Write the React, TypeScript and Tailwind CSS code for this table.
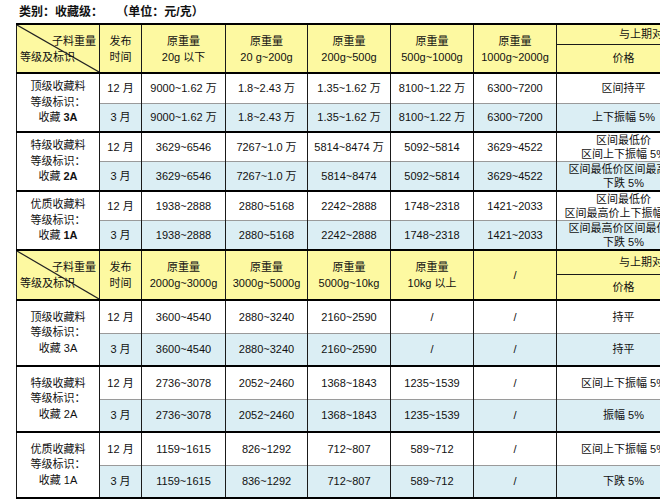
import React from "react";

type Row = { month: string; vals: string[]; change: string[] };
type Group = { name: string; mark: string; rows: Row[] };

const top: Group[] = [
  {
    name: "顶级收藏料",
    mark: "3A",
    rows: [
      { month: "12 月", vals: ["9000~1.62 万", "1.8~2.43 万", "1.35~1.62 万", "8100~1.22 万", "6300~7200"], change: ["区间持平"] },
      { month: "3 月", vals: ["9000~1.62 万", "1.8~2.43 万", "1.35~1.62 万", "8100~1.22 万", "6300~7200"], change: ["上下振幅 5%"] },
    ],
  },
  {
    name: "特级收藏料",
    mark: "2A",
    rows: [
      { month: "12 月", vals: ["3629~6546", "7267~1.0 万", "5814~8474 万", "5092~5814", "3629~4522"], change: ["区间最低价", "区间上下振幅 5%"] },
      { month: "3 月", vals: ["3629~6546", "7267~1.0 万", "5814~8474", "5092~5814", "3629~4522"], change: ["区间最低价区间最高价", "下跌 5%"] },
    ],
  },
  {
    name: "优质收藏料",
    mark: "1A",
    rows: [
      { month: "12 月", vals: ["1938~2888", "2880~5168", "2242~2888", "1748~2318", "1421~2033"], change: ["区间最低价", "区间最高价上下振幅 5%"] },
      { month: "3 月", vals: ["1938~2888", "2880~5168", "2242~2888", "1748~2318", "1421~2033"], change: ["区间最高价区间最低价", "下跌 5%"] },
    ],
  },
];

const bottom: Group[] = [
  {
    name: "顶级收藏料",
    mark: "3A",
    rows: [
      { month: "12 月", vals: ["3600~4540", "2880~3240", "2160~2590", "/", "/"], change: ["持平"] },
      { month: "3 月", vals: ["3600~4540", "2880~3240", "2160~2590", "/", "/"], change: ["持平"] },
    ],
  },
  {
    name: "特级收藏料",
    mark: "2A",
    rows: [
      { month: "12 月", vals: ["2736~3078", "2052~2460", "1368~1843", "1235~1539", "/"], change: ["区间上下振幅 5%"] },
      { month: "3 月", vals: ["2736~3078", "2052~2460", "1368~1843", "1235~1539", "/"], change: ["振幅 5%"] },
    ],
  },
  {
    name: "优质收藏料",
    mark: "1A",
    rows: [
      { month: "12 月", vals: ["1159~1615", "826~1292", "712~807", "589~712", "/"], change: ["区间上下振幅 5%"] },
      { month: "3 月", vals: ["1159~1615", "836~1292", "712~807", "589~712", "/"], change: ["下跌 5%"] },
    ],
  },
];

const bx = "border-x border-x-[#1a1a1a]";

function HeaderRows({ cols, h1, h2 }: { cols: (string | null)[]; h1: string; h2: string }) {
  return (
    <>
      <tr className={`${h1} bg-[#fdf9a1]`}>
        <td rowSpan={2} className={`${bx} border-t-2 border-t-black border-b-2 border-b-black relative p-0`}>
          <svg className="absolute inset-0 w-full h-full" preserveAspectRatio="none" viewBox="0 0 100 100">
            <line x1="0" y1="0" x2="100" y2="100" stroke="#222" strokeWidth="1.2" vectorEffect="non-scaling-stroke" />
          </svg>
          <div className="relative flex flex-col justify-between h-full py-[2px] px-[3px]">
            <span className="self-end">子料重量</span>
            <span className="self-start">等级及标识</span>
          </div>
        </td>
        <td rowSpan={2} className={`${bx} border-t-2 border-t-black border-b-2 border-b-black text-center`}>
          发布
          <br />
          时间
        </td>
        {cols.map((c, i) => (
          <td key={i} rowSpan={2} className={`${bx} border-t-2 border-t-black border-b-2 border-b-black text-center`}>
            {c === null ? (
              "/"
            ) : (
              <>
                原重量
                <br />
                {c}
              </>
            )}
          </td>
        ))}
        <td colSpan={2} className={`${bx} border-t-2 border-t-black border-b border-b-[#1a1a1a] text-center`}>
          与上期对比
        </td>
      </tr>
      <tr className={`${h2} bg-[#fdf9a1]`}>
        <td className={`${bx} border-b-2 border-b-black text-center`}>价格</td>
        <td className={`${bx} border-b-2 border-b-black text-center`}>幅度</td>
      </tr>
    </>
  );
}

function Body({ groups, heights, boldMark }: { groups: Group[]; heights: string[]; boldMark: boolean }) {
  return (
    <>
      {groups.map((g, gi) =>
        g.rows.map((r, ri) => {
          const blue = ri === 1;
          const tb = ri === 0 ? "border-t-2 border-t-black" : "border-t border-t-[#9a9a9a]";
          const bg = blue ? "bg-[#dbeef4]" : "bg-white";
          return (
            <tr key={`${gi}-${ri}`} className={heights[gi * 2 + ri]}>
              {ri === 0 && (
                <td rowSpan={2} className={`${bx} border-t-2 border-t-black bg-white text-center leading-[15.5px]`}>
                  {g.name}
                  <br />
                  等级标识：
                  <br />
                  收藏 <span className={boldMark ? "font-bold" : ""}>{g.mark}</span>
                </td>
              )}
              <td className={`${bx} ${tb} ${bg} text-center`}>{r.month}</td>
              {r.vals.map((v, vi) => (
                <td key={vi} className={`${bx} ${tb} ${bg} text-center`}>
                  {v}
                </td>
              ))}
              <td className={`${bx} ${tb} ${bg} text-center leading-[14px] whitespace-nowrap overflow-hidden`}>
                {r.change.map((c, ci) => (
                  <div key={ci}>{c}</div>
                ))}
              </td>
              <td className={`${bx} ${tb} ${bg}`}></td>
            </tr>
          );
        })
      )}
    </>
  );
}

export default function App() {
  return (
    <div className="w-[660px] h-[500px] overflow-hidden bg-white text-[#111] font-['Liberation_Sans','Noto_Sans_CJK_SC',sans-serif] text-[11px]">
      <div className="pl-[19px] pt-[3px] h-[23px] font-bold text-[12px] leading-[18px] whitespace-pre">
        类别：收藏级：    （单位：元/克）
      </div>
      <table className="ml-[16px] table-fixed border-collapse w-[720px] leading-[16px] border-b-2 border-b-black">
        <colgroup>
          <col className="w-[83px]" />
          <col className="w-[42px]" />
          <col className="w-[84px]" />
          <col className="w-[82px]" />
          <col className="w-[83px]" />
          <col className="w-[83px]" />
          <col className="w-[83px]" />
          <col className="w-[134px]" />
          <col className="w-[46px]" />
        </colgroup>
        <tbody>
          <HeaderRows cols={["20g 以下", "20 g~200g", "200g~500g", "500g~1000g", "1000g~2000g"]} h1="h-[20px]" h2="h-[29px]" />
          <Body groups={top} boldMark heights={["h-[30px]", "h-[29px]", "h-[28px]", "h-[28px]", "h-[28px]", "h-[29px]"]} />
          <HeaderRows cols={["2000g~3000g", "3000g~5000g", "5000g~10kg", "10kg 以上", null]} h1="h-[24px]" h2="h-[26px]" />
          <Body groups={bottom} boldMark={false} heights={["h-[33px]", "h-[33px]", "h-[33px]", "h-[33px]", "h-[33px]", "h-[33px]"]} />
        </tbody>
      </table>
    </div>
  );
}
